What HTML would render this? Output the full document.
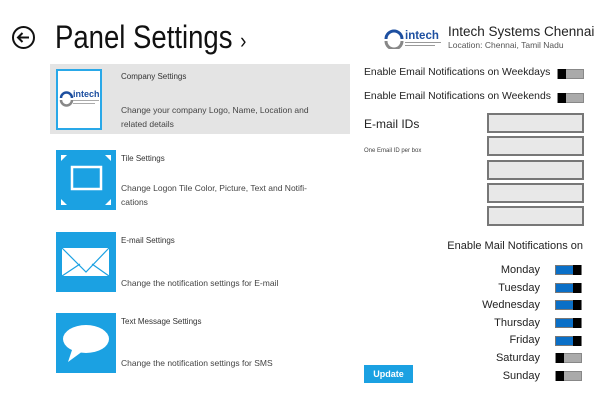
<!DOCTYPE html>
<html><head><meta charset="utf-8"><style>
*{margin:0;padding:0;box-sizing:border-box}
body{width:600px;height:400px;background:#fff;font-family:"Liberation Sans",sans-serif;color:#222;position:relative;overflow:hidden}
.a{position:absolute;white-space:nowrap}
.tile{position:absolute;left:56px;width:60px;height:60px;background:#1ba1e2}
.tt{position:absolute;left:121px;font-size:8px;color:#333}
.td{position:absolute;left:121px;font-size:8.5px;color:#444;line-height:14px}
.lbl{font-size:10.4px;color:#222}
.tog{position:absolute;width:27px;height:10px;border:1px solid #888;background:#aaa}
.tog.off::before{content:"";position:absolute;left:0;top:-1px;width:8px;height:10px;background:#000}
.tog.on{background:#0a6fc7;border-color:#777}
.tog.on::after{content:"";position:absolute;right:0;top:-1px;width:8px;height:10px;background:#000}
.box{position:absolute;left:487px;width:97px;height:20px;border:2px solid #777;background:#e8e8e8}
.day{position:absolute;right:60px;font-size:11px;color:#222}
</style></head><body>
<svg class="a" style="left:11px;top:25px" width="25" height="25" viewBox="0 0 25 25"><circle cx="12.5" cy="12.5" r="10.5" fill="none" stroke="#111" stroke-width="2"/><path d="M7 12.5H18M11.5 8L7 12.5L11.5 17" fill="none" stroke="#111" stroke-width="2"/></svg>
<div class="a" style="left:55px;top:19px;font-size:32px;font-weight:300;color:#111;transform:scaleX(0.86);transform-origin:left">Panel Settings <span style="font-size:22px">›</span></div>

<svg class="a" style="left:384px;top:25px" width="60" height="24" viewBox="0 0 60 24"><path d="M2 14a8 8 0 0 1 16 0" fill="none" stroke="#1d4fa0" stroke-width="3"/><path d="M2 16a8 8 0 0 0 16 0" fill="none" stroke="#888" stroke-width="3"/><text x="21" y="14" font-family="Liberation Sans" font-size="11.5" font-weight="bold" fill="#1d4fa0">intech</text><rect x="21" y="17" width="36" height="1" fill="#999"/><rect x="21" y="20" width="30" height="1" fill="#999"/></svg>
<div class="a" style="left:448px;top:24px;font-size:13.5px;color:#222">Intech Systems Chennai</div>
<div class="a" style="left:448px;top:40px;font-size:8.5px;color:#555">Location: Chennai, Tamil Nadu</div>

<div class="a" style="left:50px;top:64px;width:300px;height:70px;background:#e4e4e4"></div>
<div class="a" style="left:56px;top:69px;width:46px;height:61px;background:#fff;border:2px solid #29a8e8"></div>
<svg class="a" style="left:59px;top:87px" width="42" height="22" viewBox="0 0 42 22"><path d="M2 11a5.5 5.5 0 0 1 11 0" fill="none" stroke="#1d4fa0" stroke-width="2.5"/><path d="M2 13a5.5 5.5 0 0 0 11 0" fill="none" stroke="#888" stroke-width="2.5"/><text x="14" y="10" font-family="Liberation Sans" font-size="9" font-weight="bold" fill="#1d4fa0">intech</text><rect x="14" y="13" width="26" height="1" fill="#aaa"/><rect x="14" y="16" width="22" height="1" fill="#aaa"/></svg>
<div class="tt" style="top:72px">Company Settings</div>
<div class="td" style="top:103px">Change your company Logo, Name, Location and<br>related details</div>

<div class="tile" style="top:150px"><svg width="60" height="60" viewBox="0 0 60 60"><rect x="16" y="17" width="29" height="22" fill="none" stroke="#fff" stroke-width="2.5"/><path d="M5 5h6L5 11zM55 5h-6l6 6zM5 55h6l-6-6zM55 55h-6l6-6z" fill="#fff"/></svg></div>
<div class="tt" style="top:154px">Tile Settings</div>
<div class="td" style="top:181px">Change Logon Tile Color, Picture, Text and Notifi-<br>cations</div>

<div class="tile" style="top:232px"><svg width="60" height="60" viewBox="0 0 60 60"><rect x="6" y="16" width="47" height="28" fill="#fff"/><path d="M6 16L30 40L53 16M6 44L24 32M53 44L36 32" fill="none" stroke="#1ba1e2" stroke-width="1.2"/></svg></div>
<div class="tt" style="top:236px">E-mail Settings</div>
<div class="td" style="top:276px">Change the notification settings for E-mail</div>

<div class="tile" style="top:313px"><svg width="60" height="60" viewBox="0 0 60 60"><ellipse cx="30" cy="26" rx="23" ry="14" fill="#fff"/><path d="M17 34L12 49L27 38z" fill="#fff"/></svg></div>
<div class="tt" style="top:317px">Text Message Settings</div>
<div class="td" style="top:356px">Change the notification settings for SMS</div>

<div class="a lbl" style="left:364px;top:67px">Enable Email Notifications on Weekdays</div>
<div class="tog off" style="left:557px;top:69px"></div>
<div class="a lbl" style="left:364px;top:91px">Enable Email Notifications on Weekends</div>
<div class="tog off" style="left:557px;top:93px"></div>
<div class="a" style="left:364px;top:117px;font-size:12px">E-mail IDs</div>
<div class="a" style="left:364px;top:148px;font-size:6px;color:#444">One Email ID per box</div>
<div class="box" style="top:113px"></div>
<div class="box" style="top:136px"></div>
<div class="box" style="top:160px"></div>
<div class="box" style="top:183px"></div>
<div class="box" style="top:206px"></div>

<div class="a lbl" style="right:17px;top:240px;font-size:11px">Enable Mail Notifications on</div>
<div class="day" style="top:264px">Monday</div><div class="tog on" style="left:555px;top:265px"></div>
<div class="day" style="top:282px">Tuesday</div><div class="tog on" style="left:555px;top:283px"></div>
<div class="day" style="top:299px">Wednesday</div><div class="tog on" style="left:555px;top:300px"></div>
<div class="day" style="top:317px">Thursday</div><div class="tog on" style="left:555px;top:318px"></div>
<div class="day" style="top:334px">Friday</div><div class="tog on" style="left:555px;top:336px"></div>
<div class="day" style="top:352px">Saturday</div><div class="tog off" style="left:555px;top:353px"></div>
<div class="day" style="top:370px">Sunday</div><div class="tog off" style="left:555px;top:371px"></div>

<div class="a" style="left:364px;top:365px;width:49px;height:18px;background:#1ba1e2;color:#fff;font-size:9px;font-weight:bold;text-align:center;line-height:18px">Update</div>
</body></html>
